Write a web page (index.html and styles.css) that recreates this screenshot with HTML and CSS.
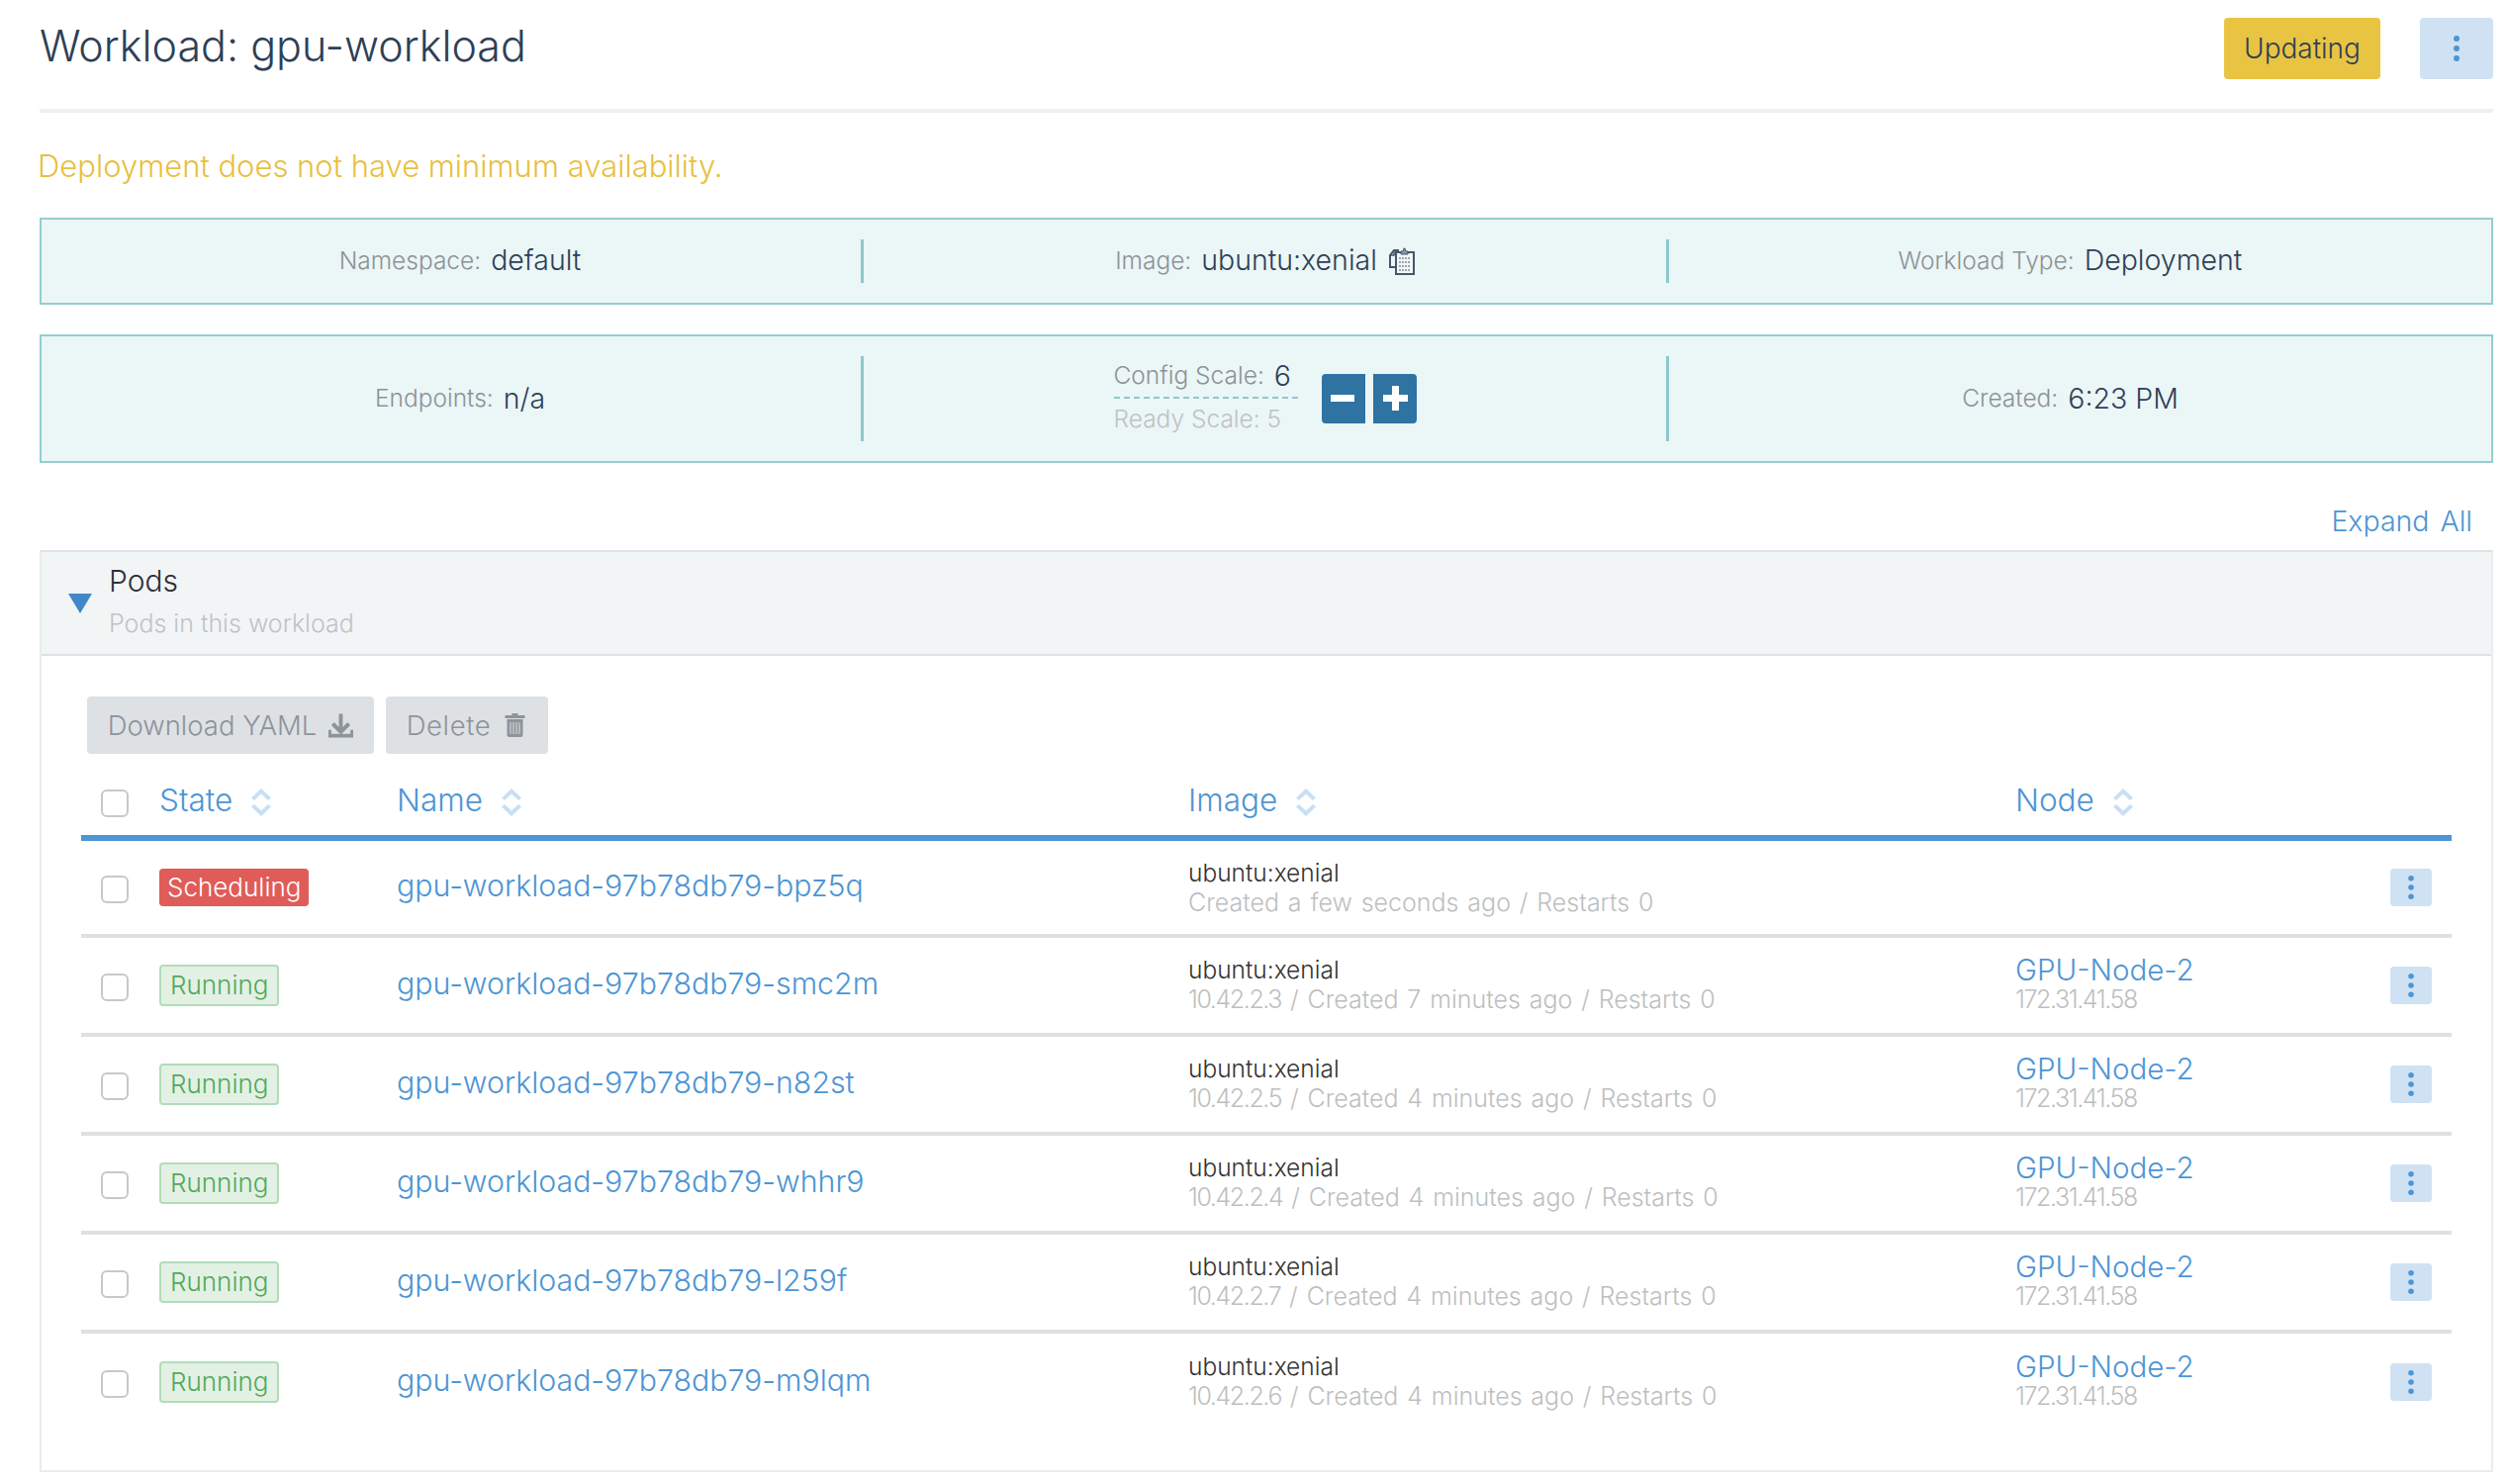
FILE: index.html
```html
<!DOCTYPE html>
<html lang="en">
<head>
<meta charset="utf-8">
<title>Workload: gpu-workload</title>
<link rel="stylesheet" href="styles.css">
</head>
<body>
<svg class="defs" width="0" height="0" aria-hidden="true">
  <symbol id="kebab" viewBox="0 0 8 28"><circle cx="4" cy="4" r="3"/><circle cx="4" cy="14" r="3"/><circle cx="4" cy="24" r="3"/></symbol>
  <symbol id="sort" viewBox="0 0 20 30"><path class="up" d="M0 10.500 10 1l10 9.500-3 2.500-7-6.500-7 6.500z"/><path class="down" d="M0 19.500l10 9.500 10-9.500-3-2.500-7 6.500-7-6.500z"/></symbol>
</svg>
<main class="page">
  <header class="top">
    <h1 class="title">Workload: gpu-workload</h1>
    <div class="top-actions">
      <span class="state-btn">Updating</span>
      <button class="more-btn"><svg class="kebab-lg"><use href="#kebab"/></svg></button>
    </div>
  </header>
  <p class="warning">Deployment does not have minimum availability.</p>

  <section class="banner banner-a">
    <div class="cell cell-first"><span class="lbl">Namespace:</span><span class="val">default</span></div>
    <div class="cell cell-mid"><span class="lbl">Image:</span><span class="val">ubuntu:xenial</span>
      <svg class="clip" viewBox="0 0 26 28"><path d="M6 20H1V8l4-5h5" fill="none" stroke="#46566d" stroke-width="2"/><path d="M5 3v5H1" fill="none" stroke="#46566d" stroke-width="1.500"/><rect x="7" y="5" width="18" height="22" fill="#f2f6f7" stroke="#46566d" stroke-width="2"/><path d="M12 7V4h2l1-3h1l1 3h2v3z" fill="#8a98a8" stroke="#46566d" stroke-width="1"/><path d="M10 11h12M10 15h12M10 19h12M10 23h12" stroke="#7f8da0" stroke-width="1.500" stroke-dasharray="2 1"/></svg>
    </div>
    <div class="cell cell-last"><span class="lbl">Workload Type:</span><span class="val">Deployment</span></div>
  </section>

  <section class="banner banner-b">
    <div class="cell cell-first"><span class="lbl">Endpoints:</span><span class="val">n/a</span></div>
    <div class="cell cell-mid scale">
      <div class="scale-text">
        <div class="scale-conf"><span class="lbl">Config Scale:</span><span class="val">6</span></div>
        <div class="scale-ready">Ready Scale: 5</div>
      </div>
      <div class="steppers">
        <span class="step step-l"><svg viewBox="0 0 44 50"><rect x="9" y="21" width="24" height="7"/></svg></span>
        <span class="step step-r"><svg viewBox="0 0 44 50"><path d="M10 21h9v-9h7v9h9v7h-9v9h-7v-9h-9z"/></svg></span>
      </div>
    </div>
    <div class="cell cell-last"><span class="lbl">Created:</span><span class="val">6:23 PM</span></div>
  </section>

  <div class="expand-row"><a class="expand">Expand All</a></div>

  <section class="panel">
    <div class="panel-head">
      <svg class="tri" viewBox="0 0 24 20"><path d="M0 0h24L12 20z"/></svg>
      <div class="panel-titles">
        <div class="panel-title">Pods</div>
        <div class="panel-sub">Pods in this workload</div>
      </div>
    </div>
    <div class="panel-body">
      <div class="bulk">
        <span class="gbtn btn-dl">Download YAML
          <svg class="gicon" viewBox="0 0 26 26"><path d="M11 1h4v14l5-5 3 3-10 10L3 13l3-3 5 5z"/><path d="M0 18h3v4h20v-4h3v8H0z"/></svg>
        </span>
        <span class="gbtn btn-del">Delete
          <svg class="gicon" viewBox="0 0 22 26"><path d="M8 1h6v2h7v3H1V3h7z"/><path fill-rule="evenodd" d="M3 7h16v16a2 2 0 0 1-2 2H5a2 2 0 0 1-2-2zm3 3v12h1V10zm3 0v12h1V10zm3 0v12h1V10zm3 0v12h1V10z"/></svg>
        </span>
      </div>

      <div class="grid thead">
        <span class="cb"></span>
        <span class="th">State <svg class="sort sort-active"><use href="#sort"/></svg></span>
        <span class="th">Name <svg class="sort"><use href="#sort"/></svg></span>
        <span class="th">Image <svg class="sort"><use href="#sort"/></svg></span>
        <span class="th">Node <svg class="sort"><use href="#sort"/></svg></span>
        <span></span>
      </div>

      <div class="grid row row-first">
        <span class="cb"></span>
        <span><span class="badge badge-sched">Scheduling</span></span>
        <a class="pod">gpu-workload-97b78db79-bpz5q</a>
        <div><div class="img">ubuntu:xenial</div><div class="sub">Created a few seconds ago / Restarts 0</div></div>
        <div></div>
        <button class="act"><svg class="kebab-sm"><use href="#kebab"/></svg></button>
      </div>
      <div class="grid row">
        <span class="cb"></span>
        <span><span class="badge badge-run">Running</span></span>
        <a class="pod">gpu-workload-97b78db79-smc2m</a>
        <div><div class="img">ubuntu:xenial</div><div class="sub"><span class="ip">10.42.2.3</span> / Created 7 minutes ago / Restarts 0</div></div>
        <div><a class="node">GPU-Node-2</a><div class="sub ip">172.31.41.58</div></div>
        <button class="act"><svg class="kebab-sm"><use href="#kebab"/></svg></button>
      </div>
      <div class="grid row">
        <span class="cb"></span>
        <span><span class="badge badge-run">Running</span></span>
        <a class="pod">gpu-workload-97b78db79-n82st</a>
        <div><div class="img">ubuntu:xenial</div><div class="sub"><span class="ip">10.42.2.5</span> / Created 4 minutes ago / Restarts 0</div></div>
        <div><a class="node">GPU-Node-2</a><div class="sub ip">172.31.41.58</div></div>
        <button class="act"><svg class="kebab-sm"><use href="#kebab"/></svg></button>
      </div>
      <div class="grid row">
        <span class="cb"></span>
        <span><span class="badge badge-run">Running</span></span>
        <a class="pod">gpu-workload-97b78db79-whhr9</a>
        <div><div class="img">ubuntu:xenial</div><div class="sub"><span class="ip">10.42.2.4</span> / Created 4 minutes ago / Restarts 0</div></div>
        <div><a class="node">GPU-Node-2</a><div class="sub ip">172.31.41.58</div></div>
        <button class="act"><svg class="kebab-sm"><use href="#kebab"/></svg></button>
      </div>
      <div class="grid row">
        <span class="cb"></span>
        <span><span class="badge badge-run">Running</span></span>
        <a class="pod">gpu-workload-97b78db79-l259f</a>
        <div><div class="img">ubuntu:xenial</div><div class="sub"><span class="ip">10.42.2.7</span> / Created 4 minutes ago / Restarts 0</div></div>
        <div><a class="node">GPU-Node-2</a><div class="sub ip">172.31.41.58</div></div>
        <button class="act"><svg class="kebab-sm"><use href="#kebab"/></svg></button>
      </div>
      <div class="grid row row-last">
        <span class="cb"></span>
        <span><span class="badge badge-run">Running</span></span>
        <a class="pod">gpu-workload-97b78db79-m9lqm</a>
        <div><div class="img">ubuntu:xenial</div><div class="sub"><span class="ip">10.42.2.6</span> / Created 4 minutes ago / Restarts 0</div></div>
        <div><a class="node">GPU-Node-2</a><div class="sub ip">172.31.41.58</div></div>
        <button class="act"><svg class="kebab-sm"><use href="#kebab"/></svg></button>
      </div>
    </div>
  </section>
</main>
</body>
</html>
```

FILE: styles.css
```css
* { box-sizing: border-box; }
html, body { margin: 0; padding: 0; background: #fff; }
body { font-family: Inter, "Open Sans", sans-serif; font-weight: 300; color: #2f3f56; }
.defs { display: block; height: 0; }
.page { width: 2536px; height: 1500px; padding: 0 16px 0 40px; overflow: hidden; }

.top { display: flex; justify-content: space-between; align-items: flex-start; height: 114px; padding-top: 18px; border-bottom: 4px solid #edf1f2; }
.title { margin: 0; font-size: 43px; line-height: 58px; margin-top: -1px; font-weight: 300; color: #2f3f56; }
.top-actions { display: flex; gap: 40px; }
.state-btn { width: 158px; height: 62px; border-radius: 4px; background: #e9c442; color: #2f3f56; font-size: 28px; display: flex; align-items: center; justify-content: center; }
.more-btn { width: 74px; height: 62px; border: 0; border-radius: 4px; background: #cfe2f3; display: flex; align-items: center; justify-content: center; padding: 0; }
.kebab-lg { width: 8px; height: 28px; fill: #4d95d4; }

.warning { margin: 0 0 0 -2px; height: 106px; padding-top: 34px; font-size: 31px; line-height: 40px; color: #e9bf3f; }

.banner { display: grid; grid-template-columns: 831px 814px 1fr; border: 2px solid #95cdd0; background: #ebf6f6; }
.banner-a { height: 88px; margin-bottom: 30px; padding: 20px 0; }
.banner-a .cell > span { margin-top: -3px; }
.banner-b { height: 130px; padding: 20px 0; }
.banner-b .cell > span { margin-top: -2px; }
.cell { display: flex; align-items: center; justify-content: center; gap: 10px; }
.cell-first { padding-left: 18px; border-right: 3px solid #8fc8cc; }
.cell-mid { border-right: 3px solid #8fc8cc; }
.cell-last { padding-right: 20px; }
.lbl { font-size: 24.500px; color: #8d9297; }
.val { font-size: 28.500px; color: #2f3f56; }
.clip { width: 26px; height: 28px; margin-left: 2px; }

.scale { gap: 24px; }
.scale-text { width: 186px; }
.scale-conf { height: 42px; border-bottom: 2px dashed #8fc8cc; display: flex; gap: 10px; align-items: center; white-space: nowrap; padding-bottom: 4px; }
.scale-ready { height: 42px; font-size: 24.500px; line-height: 40px; color: #bfc2c4; white-space: nowrap; }
.steppers { display: flex; gap: 8px; }
.step { width: 44px; height: 50px; background: #2f73a3; display: block; }
.step svg { display: block; width: 44px; height: 50px; fill: #fff; }
.step-l { border-radius: 4px 0 0 4px; }
.step-r { border-radius: 0 4px 4px 0; }

.expand-row { height: 88px; padding: 39px 21px 0 0; text-align: right; }
.expand { font-size: 28.500px; line-height: 40px; word-spacing: 3px; color: #4d95d4; }

.panel { height: 932px; border: 2px solid #e9edee; border-top-color: #dfe2e5; }
.panel-head { height: 105px; background: #f2f5f6; border-bottom: 2px solid #dfe2e5; display: flex; align-items: center; gap: 17px; padding-left: 27px; }
.tri { width: 24px; height: 20px; fill: #4288c8; }
.panel-titles { margin-top: -2px; }
.panel-title { font-size: 30px; line-height: 40px; color: #2f3036; }
.panel-sub { font-size: 25px; line-height: 40px; margin-top: 3px; color: #c0c3c6; }
.panel-body { padding: 41px 40px 0; }

.bulk { display: flex; gap: 12px; padding-left: 6px; }
.gbtn { height: 58px; background: #dee1e4; border-radius: 4px; color: #8d949b; font-size: 27.500px; display: flex; align-items: center; justify-content: center; gap: 12px; }
.btn-dl { width: 290px; }
.btn-del { width: 164px; letter-spacing: 0.600px; }
.gicon { height: 26px; width: 25px; fill: #8d949b; }

.grid { display: grid; grid-template-columns: 79px 240px 800px 836px 1fr 62px; align-items: center; }
.thead { height: 88px; padding-bottom: 18px; align-items: end; border-bottom: 6px solid #4d95d4; }
.cb { display: block; width: 28px; height: 28px; margin-left: 20px; border: 2px solid #c6c8ca; border-radius: 6px; background: #fff; }
.th { display: flex; align-items: center; gap: 19px; font-size: 31.500px; line-height: 32px; color: #4d95d4; }
.sort { width: 20px; height: 30px; margin-top: 5px; fill: #c9dff3; }
.sort-active .up { fill: #4d95d4; }

.row { height: 100px; border-bottom: 4px solid #dfe0e2; }
.row .cb { margin-top: 3px; }
.row > div { margin-top: -2px; }
.row-first { height: 98px; }
.row-first > div { margin-top: 0; }
.row-last { height: 98px; border-bottom: 0; }
.badge { display: inline-block; font-size: 26px; border-radius: 4px; white-space: nowrap; vertical-align: middle; }
.badge-sched { background: #e05c58; color: #fff; height: 38px; line-height: 38px; padding: 0 8px; }
.badge-run { background: #e2f1e4; border: 2px solid #b3dcb9; color: #52a85b; height: 42px; line-height: 38px; padding: 0 9px; }
.pod { font-size: 30.300px; margin-top: -5px; color: #4d95d4; }
.img { font-size: 24.500px; line-height: 30px; color: #333; }
.sub { font-size: 25px; line-height: 30px; word-spacing: 1.800px; color: #bdbfc1; }
.ip { letter-spacing: -1.400px; }
.node { display: block; font-size: 29.500px; line-height: 30px; color: #4d95d4; }
.act { width: 42px; height: 38px; justify-self: end; margin-right: 20px; border: 0; padding: 0; border-radius: 4px; background: #cfe2f3; display: flex; align-items: center; justify-content: center; }
.kebab-sm { width: 8px; height: 26px; fill: #4d95d4; }
```
